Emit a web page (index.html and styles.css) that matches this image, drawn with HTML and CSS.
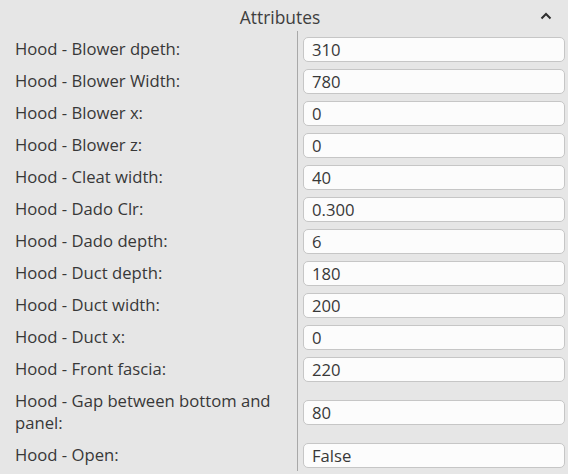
FILE: index.html
```html
<!DOCTYPE html>
<html>
<head>
<meta charset="utf-8">
<link rel="stylesheet" href="styles.css">
</head>
<body>
<div class="panel">
  <div class="header">
    <span class="spacer"></span>
    <span class="title">Attributes</span>
    <span class="toggle">
      <svg width="12" height="8" viewBox="0 0 12 8"><polyline points="1.5,6.5 6,2 10.5,6.5" fill="none" stroke="#2f2f2f" stroke-width="2"/></svg>
    </span>
  </div>
  <div class="attrs">
    <div class="divider"></div>
    <div class="lbl">Hood - Blower dpeth:</div><div class="val"><div class="field">310</div></div>
    <div class="lbl">Hood - Blower Width:</div><div class="val"><div class="field">780</div></div>
    <div class="lbl">Hood - Blower x:</div><div class="val"><div class="field">0</div></div>
    <div class="lbl">Hood - Blower z:</div><div class="val"><div class="field">0</div></div>
    <div class="lbl">Hood - Cleat width:</div><div class="val"><div class="field">40</div></div>
    <div class="lbl">Hood - Dado Clr:</div><div class="val"><div class="field">0.300</div></div>
    <div class="lbl">Hood - Dado depth:</div><div class="val"><div class="field">6</div></div>
    <div class="lbl">Hood - Duct depth:</div><div class="val"><div class="field">180</div></div>
    <div class="lbl">Hood - Duct width:</div><div class="val"><div class="field">200</div></div>
    <div class="lbl">Hood - Duct x:</div><div class="val"><div class="field">0</div></div>
    <div class="lbl">Hood - Front fascia:</div><div class="val"><div class="field">220</div></div>
    <div class="lbl">Hood - Gap between bottom and panel:</div><div class="val"><div class="field">80</div></div>
    <div class="lbl">Hood - Open:</div><div class="val"><div class="field">False</div></div>
  </div>
</div>
</body>
</html>
```
FILE: styles.css
```css
html, body {
  margin: 0;
  padding: 0;
  background: #e6e6e6;
}
body {
  font-family: "Open Sans", "Noto Sans", sans-serif;
  font-size: 16.67px;
  color: #383838;
}
.panel {
  width: 568px;
}
.header {
  height: 31px;
  box-sizing: border-box;
  padding-top: 3px;
  padding-right: 8px;
  display: grid;
  grid-template-columns: 1fr auto 1fr;
  align-items: center;
}
.title {
  color: #3e3e3e;
  font-size: 17.4px;
  line-height: 22px;
}
.toggle {
  justify-self: end;
  margin-right: 8px;
  display: flex;
  margin-top: -2px;
}
.attrs {
  display: grid;
  grid-template-columns: 297px 1px 1fr;
  grid-auto-flow: row;
  padding-top: 2px;
}
.divider {
  grid-column: 2;
  grid-row: 1 / span 13;
  background: #a8a8a8;
  margin-top: -2px;
}
.lbl {
  grid-column: 1;
  padding: 5px 20px 5px 15px;
  line-height: 22px;
}
.val {
  grid-column: 3;
  padding: 0 3px 0 5px;
  display: flex;
  align-items: center;
}
.field {
  flex: 1;
  height: 25px;
  box-sizing: border-box;
  border: 1px solid #c6c6c6;
  border-radius: 5px;
  background: #fcfcfc;
  padding-left: 8px;
  line-height: 23px;
  color: #383838;
}
```
